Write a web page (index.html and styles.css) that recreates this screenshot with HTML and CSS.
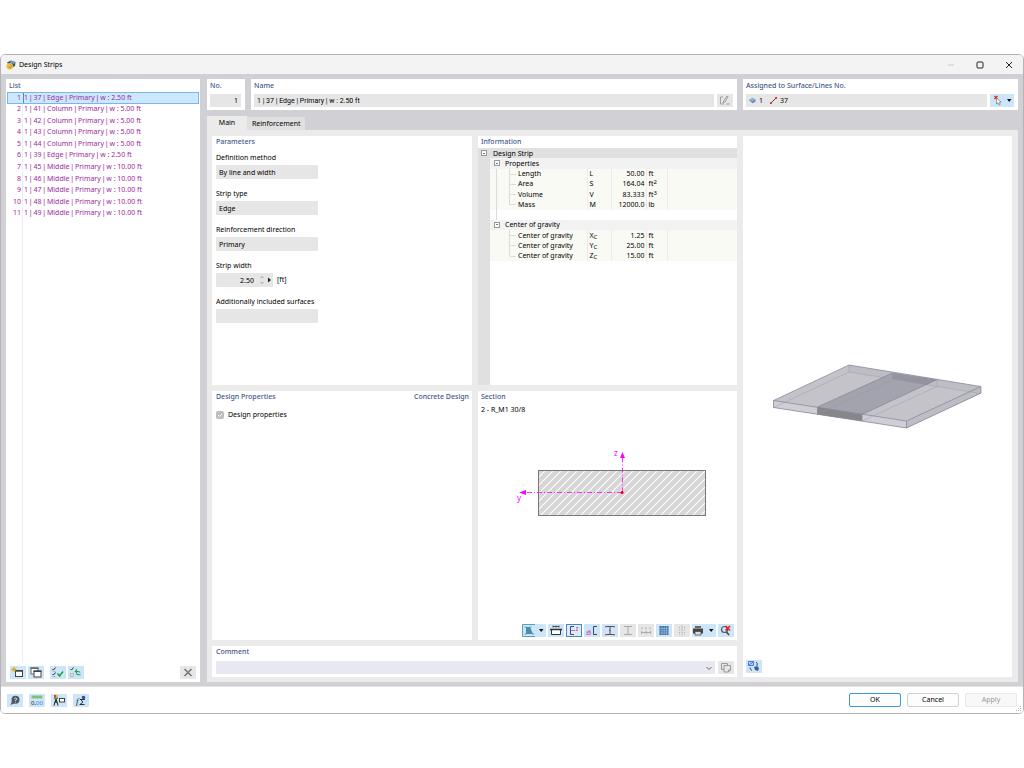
FILE: index.html
```html
<!DOCTYPE html>
<html lang="en">
<head>
<meta charset="utf-8">
<title>Design Strips</title>
<link rel="stylesheet" href="styles.css">
</head>
<body>
<div class="window">
  <header class="titlebar">
    <svg class="app-icon" viewBox="0 0 10 10"><path d="M1 2.500l4-2 4.500 1.500-.5 4-2.500 1.500-4-3z" fill="#34517c"/><path d="M5 .8l4 1.500-1 1.800-4-1.500z" fill="#7da6d6"/><circle cx="3.800" cy="6.300" r="3.300" fill="#edc142"/><path d="M2.300 6.500a1.600 1.600 0 1 0 2-2" fill="none" stroke="#a07a1c" stroke-width=".7"/></svg>
    <h1 class="title">Design Strips</h1>
    <div class="window-controls">
      <button class="wc wc-off" aria-label="Minimize"><svg viewBox="0 0 10 10"><path d="M2 5h6"/></svg></button>
      <button class="wc" aria-label="Maximize"><svg viewBox="0 0 10 10"><rect x="2" y="2" width="6" height="6" rx="1"/></svg></button>
      <button class="wc" aria-label="Close"><svg viewBox="0 0 10 10"><path d="M2 2l6 6M8 2l-6 6"/></svg></button>
    </div>
  </header>

  <main class="workspace">
    <section class="panel list-panel">
      <h2 class="heading list-heading">List</h2>
      <div class="list-area">
        <ol class="strips">
          <li class="strip selected"><span class="num">1</span><span class="label"><span>1 <i>|</i> 37 <i>|</i> Edge <i>|</i> Primary <i>|</i> w : 2.50 ft</span></span></li>
          <li class="strip"><span class="num">2</span><span class="label"><span>1 <i>|</i> 41 <i>|</i> Column <i>|</i> Primary <i>|</i> w : 5.00 ft</span></span></li>
          <li class="strip"><span class="num">3</span><span class="label"><span>1 <i>|</i> 42 <i>|</i> Column <i>|</i> Primary <i>|</i> w : 5.00 ft</span></span></li>
          <li class="strip"><span class="num">4</span><span class="label"><span>1 <i>|</i> 43 <i>|</i> Column <i>|</i> Primary <i>|</i> w : 5.00 ft</span></span></li>
          <li class="strip"><span class="num">5</span><span class="label"><span>1 <i>|</i> 44 <i>|</i> Column <i>|</i> Primary <i>|</i> w : 5.00 ft</span></span></li>
          <li class="strip"><span class="num">6</span><span class="label"><span>1 <i>|</i> 39 <i>|</i> Edge <i>|</i> Primary <i>|</i> w : 2.50 ft</span></span></li>
          <li class="strip"><span class="num">7</span><span class="label"><span>1 <i>|</i> 45 <i>|</i> Middle <i>|</i> Primary <i>|</i> w : 10.00 ft</span></span></li>
          <li class="strip"><span class="num">8</span><span class="label"><span>1 <i>|</i> 46 <i>|</i> Middle <i>|</i> Primary <i>|</i> w : 10.00 ft</span></span></li>
          <li class="strip"><span class="num">9</span><span class="label"><span>1 <i>|</i> 47 <i>|</i> Middle <i>|</i> Primary <i>|</i> w : 10.00 ft</span></span></li>
          <li class="strip"><span class="num">10</span><span class="label"><span>1 <i>|</i> 48 <i>|</i> Middle <i>|</i> Primary <i>|</i> w : 10.00 ft</span></span></li>
          <li class="strip"><span class="num">11</span><span class="label"><span>1 <i>|</i> 49 <i>|</i> Middle <i>|</i> Primary <i>|</i> w : 10.00 ft</span></span></li>
        </ol>
      </div>
      <div class="list-tools">
        <div class="tool-group">
          <button class="tool" aria-label="New"><svg viewBox="0 0 16 13"><rect x="5.500" y="4.500" width="7" height="6" fill="#fff" stroke="#444"/><path d="M5 5h8" stroke="#444" stroke-width="1.500"/><path d="M4 1v5M1.500 3.500h5M2.200 1.700l3.600 3.600M5.800 1.700L2.200 5.300" stroke="#d9a800" stroke-width=".9"/></svg></button>
          <button class="tool" aria-label="Copy"><svg viewBox="0 0 16 13"><rect x="3" y="2" width="7" height="6" fill="#fff" stroke="#666"/><path d="M2.500 2.300h8" stroke="#666" stroke-width="1.400"/><rect x="6" y="5" width="7" height="6" fill="#fff" stroke="#444"/><path d="M5.500 5.300h8" stroke="#444" stroke-width="1.500"/></svg></button>
        </div>
        <div class="tool-group">
          <button class="tool" aria-label="Select all"><svg viewBox="0 0 16 13" fill="none"><path d="M2.500 3l1 1 2-2.500M2.500 8l1 1 2-2.500" stroke="#333"/><path d="M2.500 5.200h3M2.500 10.500h3" stroke="#999" stroke-width=".7"/><path d="M7.500 7.500l2 2.500 3.500-4.500" stroke="#18a04a" stroke-width="1.500"/></svg></button>
          <button class="tool" aria-label="Invert selection"><svg viewBox="0 0 16 13" fill="none"><path d="M2.500 3l1 1 2-2.500" stroke="#333"/><rect x="2.500" y="7.500" width="3" height="3" stroke="#aaa" stroke-width=".7"/><path d="M12 6.500Q11.500 5 7.500 5.200M9 3.500L7.300 5.200 9 6.800M8 7.500q1 1.500 4.500 1.300" stroke="#18a04a" stroke-width="1.100"/></svg></button>
        </div>
        <button class="tool tool-off tool-delete" aria-label="Delete"><svg viewBox="0 0 16 13"><path d="M4.500 3l7 7M11.500 3l-7 7" stroke="#777" stroke-width="1.600"/></svg></button>
      </div>
    </section>

    <div class="detail">
      <div class="cards">
        <section class="panel card">
          <label class="heading" for="no">No.</label>
          <input class="field field-num" id="no" value="1" readonly>
        </section>
        <section class="panel card">
          <label class="heading" for="name">Name</label>
          <div class="card-row">
            <input class="field field-name" id="name" value="1 | 37 | Edge | Primary | w : 2.50 ft" readonly>
            <button class="tool tool-off" aria-label="Edit name"><svg viewBox="0 0 16 13" fill="none" stroke="#999"><path d="M6 3H3.500v7H7M6 9l1-2.500L10 2l1 .7L8 8zM9 10h4" stroke-width=".9"/></svg></button>
          </div>
        </section>
        <section class="panel card">
          <h2 class="heading">Assigned to Surface/Lines No.</h2>
          <div class="card-row">
            <div class="field assigned">
              <svg class="mini" viewBox="0 0 8 8"><path d="M0 3.500L4 1l3.500 2v2L4 7z" fill="#5f87b5"/><path d="M0 3.500L4 1l3.500 2L4 5z" fill="#8fb0d4"/></svg><span class="assigned-id">1</span>
              <svg class="mini" viewBox="0 0 8 8"><path d="M1 7l6-6" stroke="#333"/><path d="M0 6h2v2H0zM6 0h2v2H6z" fill="#d22"/></svg><span class="assigned-id">37</span>
            </div>
            <button class="tool tool-wide" aria-label="Select in graphics"><svg viewBox="0 0 24 13"><path d="M4.500 2l3 3M7.500 2l-3 3" stroke="#e02020" stroke-width="1.200"/><path d="M6.500 4v6l1.500-1.300 1 2.300 1.200-.6-1-2.200h2z" fill="#fff" stroke="#777" stroke-width=".7"/><path d="M17 5h4.500L19.200 8z" fill="#111"/></svg></button>
          </div>
        </section>
      </div>

      <nav class="tabs" role="tablist">
        <button class="tab tab-active" role="tab" aria-selected="true">Main</button>
        <button class="tab" role="tab" aria-selected="false">Reinforcement</button>
      </nav>

      <div class="page">
        <section class="panel parameters">
          <h2 class="heading">Parameters</h2>
          <div class="param"><label for="method">Definition method</label><input class="field" id="method" value="By line and width" readonly></div>
          <div class="param"><label for="type">Strip type</label><input class="field" id="type" value="Edge" readonly></div>
          <div class="param"><label for="dir">Reinforcement direction</label><input class="field" id="dir" value="Primary" readonly></div>
          <div class="param"><label for="width">Strip width</label>
            <div class="width-row">
              <div class="spin"><input class="field field-num" id="width" value="2.50" readonly><svg class="spin-marks" viewBox="0 0 18 14"><path d="M5.500 5L7 3.500 8.500 5M5.500 9L7 10.500 8.500 9" fill="none" stroke="#888" stroke-width=".8"/><path d="M13 4.500v5L16 7z" fill="#222"/></svg></div>
              <span>[ft]</span>
            </div>
          </div>
          <div class="param"><label for="extra">Additionally included surfaces</label><input class="field" id="extra" value="" readonly></div>
        </section>

        <section class="panel information">
          <h2 class="heading info-heading">Information</h2>
          <div class="info-body">
            <table class="props">
              <colgroup><col class="c-gutter"><col class="c-name"><col class="c-sym"><col class="c-val"><col class="c-unit"><col></colgroup>
              <tbody>
              <tr class="root"><td class="box-cell"><span class="toggle"></span></td><th colspan="5" scope="rowgroup">Design Strip</th></tr>
              <tr class="group"><td></td><th colspan="5" scope="rowgroup"><div class="group-name"><span class="toggle"></span>Properties</div></th></tr>
              <tr class="leaf trunk"><td></td><th scope="row">Length</th><td>L</td><td class="val">50.00</td><td>ft</td><td></td></tr>
              <tr class="leaf trunk"><td></td><th scope="row">Area</th><td>S</td><td class="val">164.04</td><td>ft<sup>2</sup></td><td></td></tr>
              <tr class="leaf trunk"><td></td><th scope="row">Volume</th><td>V</td><td class="val">83.333</td><td>ft<sup>3</sup></td><td></td></tr>
              <tr class="leaf trunk last"><td></td><th scope="row">Mass</th><td>M</td><td class="val">12000.0</td><td>lb</td><td></td></tr>
              <tr class="blank trunk"><td></td><th colspan="5"></th></tr>
              <tr class="group"><td></td><th colspan="5" scope="rowgroup"><div class="group-name"><span class="toggle"></span>Center of gravity</div></th></tr>
              <tr class="leaf"><td></td><th scope="row">Center of gravity</th><td>X<sub>C</sub></td><td class="val">1.25</td><td>ft</td><td></td></tr>
              <tr class="leaf"><td></td><th scope="row">Center of gravity</th><td>Y<sub>C</sub></td><td class="val">25.00</td><td>ft</td><td></td></tr>
              <tr class="leaf last"><td></td><th scope="row">Center of gravity</th><td>Z<sub>C</sub></td><td class="val">15.00</td><td>ft</td><td></td></tr>
              </tbody>
            </table>
          </div>
        </section>

        <section class="panel design">
          <div class="design-head"><h2 class="heading">Design Properties</h2><h2 class="heading">Concrete Design</h2></div>
          <label class="check"><input class="checkbox" type="checkbox" checked disabled><svg class="tick" viewBox="0 0 8 8"><path d="M2 4l1.500 1.500L6 2.800" fill="none" stroke="#fff"/></svg>Design properties</label>
        </section>

        <section class="panel section">
          <h2 class="heading">Section</h2>
          <p class="section-name">2 - R_M1 30/8</p>
          <svg class="section-view" viewBox="478 415 259 209">
            <defs><pattern id="hatch" width="8" height="8" patternUnits="userSpaceOnUse"><rect width="8" height="8" fill="#d6d6d6"/><path d="M-1 9L9-1M-1 1L1-1M7 9l2-2" stroke="#fff" stroke-width="1.100"/></pattern></defs>
            <rect x="538.500" y="470.500" width="167" height="45" fill="url(#hatch)" stroke="#777"/>
            <path d="M622.500 492.500V458M622 492.500H526" fill="none" stroke="#f0f" stroke-width=".8" stroke-dasharray="5 2 1 2"/>
            <path d="M620 458l2.500-6 2.500 6zM526 490v5l-7-2.500z" fill="#f0f"/>
            <circle cx="622" cy="492.500" r="1.600" fill="#f00020"/>
            <text class="axis" x="614" y="456">z</text><text class="axis" x="517" y="501">y</text>
          </svg>
          <div class="section-tools">
            <button class="tool tool-wide" aria-label="View mode"><svg viewBox="0 0 24 13" fill="none"><path d="M13 .5H.5v12H13" stroke="#5a9cc8"/><path d="M4 10V3h4l3 7z" fill="#4c8bad"/><path d="M2.500 2.500h2v1h-2zM2.500 9.500h2v1h-2zM10 9.500h2v1h-2zM7.500 2.500h2v1h-2z" fill="#3fc05a"/><path d="M17 5h4.500L19.200 8z" fill="#111"/></svg></button>
            <button class="tool" aria-label="Dimensions"><svg viewBox="0 0 16 13" fill="none" stroke="#333"><path d="M3.500 5.500h9v5h-9z" fill="#fff"/><path d="M2 5.500h12" stroke-width="1.500"/><path d="M5 2.500h6M5 1.500v2M11 1.500v2M8 1.500v2" stroke-width=".8"/></svg></button>
            <button class="tool tool-on" aria-label="Axes"><svg viewBox="0 0 16 13" fill="none"><path d="M8 2.500H4.500v8H8" stroke="#447"/><path d="M5 6.500h4" stroke="#e0409a" stroke-width=".8"/><path d="M10 3.500h2l-2 3h2" stroke="#e0409a" stroke-width=".7"/></svg></button>
            <button class="tool" aria-label="Principal axes"><svg viewBox="0 0 16 13" fill="none"><path d="M13 2.500H9.500v8H13" stroke="#446"/><path d="M2.500 10.500l3-4.500 1 4.500zM2 8h5" stroke="#d65ba5" stroke-width=".8"/></svg></button>
            <button class="tool" aria-label="Stress points"><svg viewBox="0 0 16 13" fill="none"><path d="M3 2.500h10M3 10.500h10M8 3v7" stroke="#456"/><path d="M3 2h2v1.200H3zM11 2h2v1.200h-2zM3 10h2v1.200H3zM11 10h2v1.200h-2zM7.300 5.800h1.500v1.500H7.300z" fill="#e23b4b"/></svg></button>
            <button class="tool tool-off" aria-label="Section parts"><svg viewBox="0 0 16 13" fill="none" stroke="#aaa"><path d="M4 2.500h8M4 10.500h8M8 3v7"/></svg></button>
            <button class="tool tool-off" aria-label="Numbering"><svg viewBox="0 0 16 13" fill="none" stroke="#aaa"><path d="M3 8.500h10M3.500 7v3M8 7v3M12.500 7v3"/><path d="M4 3v2.500M8 3v2.500M12 3v2.500" stroke-width=".8"/></svg></button>
            <button class="tool" aria-label="Grid"><svg viewBox="0 0 16 13"><path d="M3.500 2h9v9h-9z" fill="#3f6d9e"/><path d="M3.500 4.500h9M3.500 6.800h9M3.500 9h9M6 2v9M8.200 2v9M10.500 2v9" stroke="#a9cbea" stroke-width=".6"/></svg></button>
            <button class="tool tool-off" aria-label="Scale"><svg viewBox="0 0 16 13" fill="none" stroke="#aaa"><path d="M8 1.500v10" stroke-dasharray="2 1"/><path d="M5.500 3v8M10.500 3v8" stroke-dasharray="1 1.500"/></svg></button>
            <button class="tool tool-wide" aria-label="Print"><svg viewBox="0 0 24 13"><path d="M3 2h6v2H3z" fill="#666"/><path d="M1 4.500h10v5H1z" fill="#444"/><path d="M3 7.500h6V11H3z" fill="#ddd" stroke="#444" stroke-width=".7"/><path d="M17 5h4.500L19.200 8z" fill="#111"/></svg></button>
            <button class="tool" aria-label="Reset view"><svg viewBox="0 0 16 13" fill="none"><circle cx="6.500" cy="5.500" r="3" stroke="#555" stroke-width="1.200"/><path d="M8.500 8l2.500 3" stroke="#444" stroke-width="1.500"/><path d="M7.500 2l4.500 4.500M12 2L7.500 6.500" stroke="#e82020" stroke-width="1.700"/></svg></button>
          </div>
        </section>

        <section class="panel comment">
          <label class="heading" for="comment">Comment</label>
          <div class="card-row">
            <div class="combo"><select class="field" id="comment"><option></option></select><svg class="chevron" viewBox="0 0 8 8"><path d="M1.500 3L4 5.500 6.500 3" fill="none" stroke="#666"/></svg></div>
            <button class="tool tool-off" aria-label="Comment library"><svg viewBox="0 0 16 13" fill="#e6e6e6" stroke="#999"><path d="M3.500 2.500h6v6h-6z"/><path d="M6 4.500h6.500v4.500L10.500 11H6z"/><path d="M12.500 9h-2v2" fill="none"/></svg></button>
          </div>
        </section>

        <section class="panel preview">
          <svg class="model" viewBox="743 136 269 524">
            <path d="M773.500 400.500L849 365l131.500 21.500v6.500L906.500 428 773.500 407.500z" fill="#c3c3c9"/>
            <path d="M773.500 400.500L906.500 421v7L773.500 407.500z" fill="#ceced4"/>
            <path d="M906.500 421l74.500-34.500v7L906.500 428z" fill="#bdbdc5"/>
            <path d="M849 365l131.500 21.500v6.500L849 372z" fill="#b9b9c0" opacity=".6"/>
            <path d="M817.500 407l75-34 44.500 6.500L862 414.500z" fill="#a3a3ae"/>
            <path d="M892.500 373l44.500 6.500-11 5.500-33.500-6z" fill="#9494a0"/>
            <path d="M817.500 407l44.500 7.500v6.500l-44.500-6.500z" fill="#87878a"/>
            <path d="M773.500 407.500L849 372l131.500 21.500M849 365v7M892.500 373v7l-75 34M937 379.500v7L862 421" fill="none" stroke="#9696a6" stroke-width=".4"/>
            <path d="M773.500 400.500L849 365l132 21.500-74.500 34.500zM773.500 400.500v7L906.500 428v-7M906.500 428l74.500-35v-6.500M817.500 414.500V407l75-34M862 421v-6.500l75-35" fill="none" stroke="#82829a" stroke-width=".7"/>
          </svg>
          <button class="tool preview-tool" aria-label="View settings"><svg viewBox="0 0 16 13" fill="none"><path d="M2.500 1.500h5v4h-5z" fill="#b9d2ff" stroke="#4a78e0"/><path d="M3 5l4-3" stroke="#4a78e0"/><path d="M10 2q2 1 1 4M4 7.500q0 2 2 3" stroke="#444"/><path d="M8 7l3-1 2 2-1 3-3-1z" fill="#3f5f9a"/></svg></button>
        </section>
      </div>
    </div>
  </main>

  <footer class="footer">
    <div class="footer-tools">
      <button class="tool" aria-label="Help"><svg viewBox="0 0 16 13"><circle cx="8.500" cy="5.800" r="4" fill="#4d5963"/><path d="M5 7l-1.500 4L8 9z" fill="#4d5963"/><path d="M7.200 4.800q1.400-1.600 2.600 0 0 1-1.300 1.500v.7M8.500 7.800v.8" fill="none" stroke="#fff" stroke-width=".8"/></svg></button>
      <button class="tool" aria-label="Units"><svg viewBox="0 0 16 13"><path d="M2.500 1.500h11v3h-11z" fill="#86c97e"/><path d="M5 2v2M8 2v2M11 2v2" stroke="#5fa65a" stroke-width=".7"/><text class="glyph" x="2" y="11">0,</text><text class="glyph glyph-blue" x="7" y="11">00</text></svg></button>
      <button class="tool" aria-label="Display"><svg viewBox="0 0 16 13" fill="none"><path d="M3 1h2v2.500H3z" fill="#d33"/><path d="M5 1h2v2.500H5z" fill="#e8c020"/><path d="M3 3.500h4V5H3z" fill="#3a9b4a"/><path d="M5 5L3 11.500M5 5l2 6.500M3.500 8h3" stroke="#222"/><rect x="8.500" y="4.500" width="5" height="3.500" fill="#fff" stroke="#444"/></svg></button>
      <button class="tool" aria-label="Formula"><svg viewBox="0 0 16 13"><text class="formula" x="3" y="10">f</text><path d="M7 5.500h5M6.500 10.500h5M7.500 5.500l2.500 2.500-3 2.500" stroke="#222" fill="none" stroke-width=".9"/><circle cx="10.500" cy="3.500" r="1.800" fill="#33549a"/></svg></button>
    </div>
    <div class="actions">
      <button class="action action-default">OK</button>
      <button class="action">Cancel</button>
      <button class="action" disabled>Apply</button>
    </div>
    <svg class="grip" viewBox="0 0 6 6"><path d="M4 0h1v1H4zM4 2h1v1H4zM4 4h1v1H4zM2 2h1v1H2zM2 4h1v1H2zM0 4h1v1H0z" fill="#b5b5b5"/></svg>
  </footer>
</div>
</body>
</html>
```
FILE: styles.css
```css
* { box-sizing: border-box; }
body {
  margin: 0;
  height: 100vh;
  padding: 54px 0;
  display: flex;
  background: #fff;
  color: #000;
  font: 7px/10px "Noto Sans", "Open Sans", sans-serif;
}
h1, h2, p, ol { margin: 0; padding: 0; font: inherit; list-style: none; }
button, input, select { font: inherit; color: inherit; border: 0; padding: 0; margin: 0; border-radius: 0; background: none; min-width: 0; }
svg { display: block; }

.window {
  flex: 1;
  min-width: 0;
  display: flex;
  flex-direction: column;
  border: 1px solid #b4b4b8;
  border-radius: 5px;
  overflow: hidden;
  position: relative;
}
.titlebar { display: flex; align-items: center; height: 19px; padding: 0 4px 0 5px; gap: 3px; background: #f3f3f3; }
.app-icon { width: 10px; height: 10px; }
.title { font-size: 7px; flex: 1; }
.window-controls { display: flex; gap: 9px; }
.wc { width: 20px; height: 12px; display: grid; place-items: center; }
.wc svg { width: 10px; height: 10px; fill: none; stroke: #222; }
.wc-off svg { stroke: #ccc; }

.workspace {
  flex: 1;
  min-height: 0;
  display: grid;
  grid-template-columns: 194px minmax(0, 1fr);
  grid-template-rows: minmax(0, 1fr);
  gap: 7px;
  padding: 5px 5px 4px;
  background: #d0d0d5;
}
.panel { background: #fff; display: flex; flex-direction: column; min-width: 0; min-height: 0; }
.heading { color: #44588a; font-weight: 500; line-height: 10px; }

.list-heading { padding: 2px 3px 1px; }
.list-area { flex: 1; margin: 0 1px; background: linear-gradient(#ededf0, #ededf0) 15px 0 / 1px 100% no-repeat; }
.strips { display: grid; grid-auto-rows: 1fr; height: 127px; color: #9c2a9c; }
.strips i { font: 7px/10px "Liberation Sans", sans-serif; }
.strip { display: flex; align-items: center; }
.num { width: 15px; text-align: right; padding-right: 1px; align-self: stretch; display: grid; align-items: center; }
.label { flex: 1; margin-left: 1px; padding-left: 1px; align-self: stretch; display: grid; align-items: center; }
.selected { background: #cce8ff; outline: 1px solid #78b7e8; outline-offset: -1px; }
.selected .label { outline: 1px solid #5b89ab; outline-offset: -1px; }
.list-tools { display: flex; gap: 6px; padding: 3px 4px; }
.tool-group { display: flex; gap: 2px; }
.tool { width: 16px; height: 13px; flex: none; background: #cce5f8; }
.tool svg { width: 100%; height: 100%; }
.tool-off { background: #e6e6e6; }
.tool-wide { width: 24px; }
.tool-on { background: #d9ecfa; outline: 1px solid #4b89b8; outline-offset: -1px; }
.tool-delete { margin-left: auto; }

.detail { display: flex; flex-direction: column; min-width: 0; min-height: 0; }
.cards { display: grid; grid-template-columns: 38px minmax(0, 1fr) 275px; gap: 6px; }
.card { height: 31px; padding: 2px 4px 3px 3px; justify-content: space-between; }
.card-row { display: flex; gap: 3px; align-items: center; }
.field { width: 100%; height: 13px; background: #e6e6e6; padding: 0 3px; display: block; }
.field-num { text-align: right; }
.field-name { font-family: Roboto, "Noto Sans", sans-serif; }
.assigned { display: flex; align-items: center; gap: 3px; }
.assigned-id { margin-right: 4px; }
.mini { width: 7px; height: 7px; }

.tabs { display: flex; align-items: flex-end; margin-top: 6px; height: 14px; }
.tab { height: 13px; padding: 0 5px; background: #e0e0e0; }
.tab-active { height: 14px; width: 40px; background: #ebebeb; }
.page {
  flex: 1;
  min-height: 0;
  display: grid;
  grid-template-columns: minmax(0, 260fr) minmax(0, 259fr) minmax(0, 269fr);
  grid-template-rows: minmax(0, 1fr) minmax(0, 1fr) 31px;
  gap: 6px;
  padding: 6px 6px 5px 5px;
  background: #ebebeb;
}
.parameters, .design, .section, .comment { padding: 1px 3px 3px 4px; }
.param { display: flex; flex-direction: column; gap: 2px; margin-top: 10px; }
.parameters .heading { margin-bottom: -4px; }
.param .field { width: 102px; height: 14px; }
.width-row { display: flex; align-items: center; gap: 4px; }
.spin { display: grid; width: 57px; }
.param .spin .field { width: 57px; padding-right: 19px; grid-area: 1 / 1; }
.spin-marks { grid-area: 1 / 1; width: 18px; height: 14px; justify-self: end; }

.info-heading { padding: 1px 3px; }
.info-body { flex: 1; background: linear-gradient(#e0e0e0, #e0e0e0) 0 0 / 12px 100% no-repeat; }
.props { width: 100%; height: 113px; table-layout: fixed; border-collapse: collapse; }
.props th, .props td { padding: 0 3px; font-weight: 400; text-align: left; line-height: 9px; height: 10px; position: relative; white-space: nowrap; }
.c-gutter { width: 12px; }
.c-name { width: 97px; }
.c-sym { width: 24px; }
.c-val { width: 35px; }
.c-unit { width: 21px; }
.root { background: #e0e0e0; }
.props .group th { background: #f2f2f2; padding-left: 4px; }
.group-name { display: flex; align-items: center; }
.leaf th, .leaf td { background: #fafaf4; border-right: 1px solid #ececec; }
.leaf td:first-child { background: #e0e0e0; border: 0; }
.leaf td:last-child { border: 0; }
.props .leaf th { padding-left: 28px; }
.leaf td:nth-child(3), .leaf td:nth-child(5) { padding-left: 2px; }
.props .val { text-align: right; padding: 0 1px; }
.leaf th::before { content: ""; position: absolute; left: 19px; top: 0; bottom: 0; border-left: 1px solid #dcdcdc; }
.leaf.last th::before { bottom: 5px; }
.leaf th::after { content: ""; position: absolute; left: 20px; width: 6px; top: 5px; border-top: 1px solid #dcdcdc; }
.trunk td:first-child::after { content: ""; position: absolute; left: 18px; top: 0; bottom: 0; border-left: 1px solid #dcdcdc; z-index: 1; }
.toggle { display: block; flex: none; width: 6px; height: 6px; border: 1px solid #999; background: linear-gradient(#777, #777) center / 2px 1px no-repeat #fff; margin-right: 5px; }
.props sup, .props sub { font-size: 6px; line-height: 0; }
.props sub { vertical-align: -1px; }
.props sup { vertical-align: 2px; }

.design-head { display: flex; justify-content: space-between; }
.check { display: flex; align-items: center; gap: 4px; margin-top: 8px; }
.checkbox { appearance: none; width: 8px; height: 8px; border-radius: 2px; background: #bdbdbd; }
.tick { width: 8px; height: 8px; margin-left: -12px; }
.section { padding-left: 3px; }
.section-name { margin-top: 3px; }
.section-view { flex: 1; min-height: 0; margin: 0 -3px; }
.axis { fill: #f0f; font-size: 8px; }
.section-tools { display: flex; justify-content: flex-end; gap: 2px; }
.comment { grid-column: 1 / 3; grid-row: 3; justify-content: space-between; }
.combo { display: grid; flex: 1; }
.combo .field { grid-area: 1 / 1; appearance: none; background: #e8e8f2; }
.chevron { grid-area: 1 / 1; width: 8px; height: 8px; justify-self: end; align-self: center; margin-right: 2px; pointer-events: none; }
.preview { grid-column: 3; grid-row: 1 / 4; padding-bottom: 4px; }
.model { flex: 1; min-height: 0; width: 100%; }
.preview-tool { margin-left: 3px; }

.footer { height: 27px; padding: 0 6px; display: flex; justify-content: space-between; align-items: center; border-top: 1px solid #e2e2e2; background: #fff; }
.footer-tools { display: flex; gap: 6px; }
.actions { display: flex; gap: 6px; }
.action { width: 52px; height: 14px; border: 1px solid #d0d0d0; border-radius: 2px; background: #fdfdfd; }
.action-default { border-color: #3c96dc; }
.action:disabled { color: #999; border-color: #eaeaea; background: #f8f8f8; }
.grip { position: absolute; right: 1px; bottom: 1px; width: 6px; height: 6px; }
.glyph { font-size: 6px; fill: #222; }
.glyph-blue { fill: #3c7be0; }
.formula { font: italic 9px "Liberation Serif", serif; fill: #222; }
```
